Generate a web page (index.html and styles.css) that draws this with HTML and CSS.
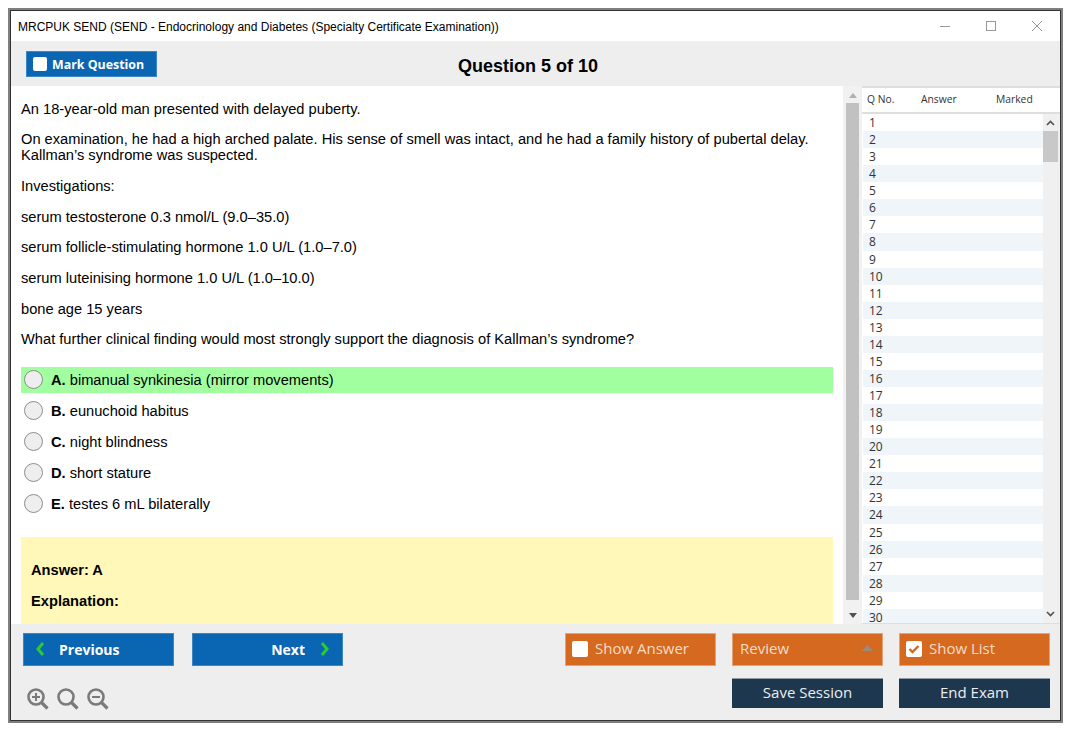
FILE: index.html
```html
<!DOCTYPE html>
<html lang="en">
<head>
<meta charset="utf-8">
<title>MRCPUK SEND</title>
<link rel="stylesheet" href="styles.css">
</head>
<body>
<div class="window">
  <header class="titlebar">
    <span class="title-text">MRCPUK SEND (SEND - Endocrinology and Diabetes (Specialty Certificate Examination))</span>
    <div class="win-controls">
      <svg class="win-icon" width="12" height="12" viewBox="0 0 12 12"><path d="M1 5.500h10" stroke="#999" fill="none"/></svg>
      <svg class="win-icon" width="12" height="12" viewBox="0 0 12 12"><rect x="1.500" y="0.500" width="9" height="9" stroke="#999" fill="none"/></svg>
      <svg class="win-icon" width="12" height="12" viewBox="0 0 12 12"><path d="M1 0l10 10M11 0L1 10" stroke="#999" fill="none"/></svg>
    </div>
  </header>
  <div class="toolbar">
    <button class="mark-btn"><span class="check"></span>Mark Question</button>
    <h1 class="q-heading">Question 5 of 10</h1>
    <span></span>
  </div>
  <main class="main">
    <section class="question">
      <p>An 18-year-old man presented with delayed puberty.</p>
      <p>On examination, he had a high arched palate. His sense of smell was intact, and he had a family history of pubertal delay. Kallman’s syndrome was suspected.</p>
      <p>Investigations:</p>
      <p>serum testosterone 0.3 nmol/L (9.0–35.0)</p>
      <p>serum follicle-stimulating hormone 1.0 U/L (1.0–7.0)</p>
      <p>serum luteinising hormone 1.0 U/L (1.0–10.0)</p>
      <p>bone age 15 years</p>
      <p>What further clinical finding would most strongly support the diagnosis of Kallman’s syndrome?</p>
      <div class="options">
        <div class="option correct"><span class="radio"></span><span><b>A.</b> bimanual synkinesia (mirror movements)</span></div>
        <div class="option"><span class="radio"></span><span><b>B.</b> eunuchoid habitus</span></div>
        <div class="option"><span class="radio"></span><span><b>C.</b> night blindness</span></div>
        <div class="option"><span class="radio"></span><span><b>D.</b> short stature</span></div>
        <div class="option"><span class="radio"></span><span><b>E.</b> testes 6 mL bilaterally</span></div>
      </div>
      <div class="answer">
        <p><b>Answer: A</b></p>
        <p><b>Explanation:</b></p>
      </div>
    </section>
    <div class="q-scroll">
      <svg width="8" height="5" viewBox="0 0 8 5"><path d="M4 0l4 5H0z" fill="#b0b0b0"/></svg>
      <div class="q-thumb"></div>
      <svg width="8" height="5" viewBox="0 0 8 5"><path d="M4 5l4-5H0z" fill="#505050"/></svg>
    </div>
    <aside class="list">
      <div class="list-head"><span class="c1">Q No.</span><span class="c2">Answer</span><span class="c3">Marked</span></div>
      <div class="list-body">
        <div class="rows">
          <div class="row">1</div><div class="row">2</div><div class="row">3</div><div class="row">4</div><div class="row">5</div>
          <div class="row">6</div><div class="row">7</div><div class="row">8</div><div class="row">9</div><div class="row">10</div>
          <div class="row">11</div><div class="row">12</div><div class="row">13</div><div class="row">14</div><div class="row">15</div>
          <div class="row">16</div><div class="row">17</div><div class="row">18</div><div class="row">19</div><div class="row">20</div>
          <div class="row">21</div><div class="row">22</div><div class="row">23</div><div class="row">24</div><div class="row">25</div>
          <div class="row">26</div><div class="row">27</div><div class="row">28</div><div class="row">29</div><div class="row">30</div>
        </div>
        <div class="l-scroll">
          <svg width="9" height="6" viewBox="0 0 9 6"><path d="M1 5l3.500-3.500L8 5" stroke="#505050" stroke-width="1.600" fill="none"/></svg>
          <div class="l-thumb"></div>
          <svg class="arrow-bottom" width="9" height="6" viewBox="0 0 9 6"><path d="M1 1l3.500 3.500L8 1" stroke="#505050" stroke-width="1.600" fill="none"/></svg>
        </div>
      </div>
    </aside>
  </main>
  <footer class="footer">
    <div class="foot-row">
      <div class="group nav">
        <button class="btn blue prev"><svg width="10" height="16" viewBox="0 0 10 16"><path d="M8 2L3 8l5 6" stroke="#2ecb2e" stroke-width="3" fill="none"/></svg>Previous</button>
        <button class="btn blue next">Next<svg width="10" height="16" viewBox="0 0 10 16"><path d="M2 2l5 6-5 6" stroke="#2ecb2e" stroke-width="3" fill="none"/></svg></button>
      </div>
      <div class="group actions">
        <button class="btn orange"><span class="check large"></span>Show Answer</button>
        <button class="btn orange review">Review<svg width="11" height="6" viewBox="0 0 11 6"><path d="M5.500 0L11 6H0z" fill="#9c8a7c"/></svg></button>
        <button class="btn orange"><span class="check large"><svg viewBox="0 0 16 16"><path d="M3.500 8l3 3 6-6" stroke="#d2691f" stroke-width="2.400" fill="none"/></svg></span>Show List</button>
      </div>
    </div>
    <div class="foot-row second">
      <div class="zooms">
        <svg width="22" height="22" viewBox="0 0 22 22"><circle cx="9" cy="9" r="7.500" stroke="#7a7a7a" stroke-width="2.600" fill="none"/><path d="M14.500 14.500L20.500 20.500" stroke="#7a7a7a" stroke-width="3.200" fill="none"/><path d="M5 9h8M9 5v8" stroke="#7a7a7a" stroke-width="2" fill="none"/></svg>
        <svg width="22" height="22" viewBox="0 0 22 22"><circle cx="9" cy="9" r="7.500" stroke="#7a7a7a" stroke-width="2.600" fill="none"/><path d="M14.500 14.500L20.500 20.500" stroke="#7a7a7a" stroke-width="3.200" fill="none"/></svg>
        <svg width="22" height="22" viewBox="0 0 22 22"><circle cx="9" cy="9" r="7.500" stroke="#7a7a7a" stroke-width="2.600" fill="none"/><path d="M14.500 14.500L20.500 20.500" stroke="#7a7a7a" stroke-width="3.200" fill="none"/><path d="M5 9h8" stroke="#7a7a7a" stroke-width="2" fill="none"/></svg>
      </div>
      <div class="group end">
        <button class="btn navy">Save Session</button>
        <button class="btn navy">End Exam</button>
      </div>
    </div>
  </footer>
</div>
</body>
</html>
```
FILE: styles.css
```css
* { box-sizing: border-box; }
html, body { margin: 0; padding: 0; background: #fff; }
body { font-family: "Liberation Sans", Arial, sans-serif; color: #000; }
button { font-family: inherit; border: 0; padding: 0; cursor: pointer; }

.window {
  margin: 10px;
  width: 1051px;
  height: 711px;
  border: 1px solid #333;
  box-shadow: 0 0 0 2px #7f7f7f;
  display: flex;
  flex-direction: column;
  background: #eee;
  overflow: hidden;
}

.titlebar {
  height: 30px;
  flex: none;
  background: #fff;
  display: flex;
  align-items: center;
  justify-content: space-between;
  padding: 1px 17px 0 7px;
}
.title-text { font-size: 12px; color: #000; }
.win-controls { display: flex; gap: 34px; }
.win-icon { display: block; }

.toolbar {
  height: 45px;
  flex: none;
  display: grid;
  grid-template-columns: 1fr auto 1fr;
  align-items: center;
  padding: 0 30px 0 15px;
}
.q-heading { margin: 0; padding-top: 6px; font-size: 18px; font-weight: bold; }
.mark-btn {
  justify-self: start;
  align-self: start;
  width: 131px;
  height: 26px;
  margin-top: 10px;
  background: #0a66b2;
  border: 1px solid #3c86c4;
  color: #fff;
  font-family: "Open Sans", sans-serif;
  font-weight: 700;
  font-size: 12.400px;
  display: flex;
  align-items: center;
  gap: 5px;
  padding-left: 6px;
}

.check {
  width: 14px;
  height: 14px;
  border-radius: 2px;
  background: #fff;
  display: block;
  flex: none;
}
.check.large { width: 16px; height: 16px; }
.check svg { display: block; width: 16px; height: 16px; }

.main { flex: 1; min-height: 0; display: flex; background: #fff; }

.question {
  width: 832px;
  flex: none;
  padding: 0 10px;
  font-size: 14.670px;
  line-height: 16px;
  overflow: hidden;
}
.question p { margin: 14.670px 0; }

.options { margin-top: 20px; display: flex; flex-direction: column; gap: 5px; }
.option {
  height: 26px;
  display: flex;
  align-items: center;
  gap: 8px;
  padding-left: 3px;
}
.option.correct { background: #a2ff9f; }
.radio {
  width: 19px;
  height: 19px;
  margin-top: -1px;
  border-radius: 50%;
  border: 1px solid #8d8d8d;
  background: #eee;
  flex: none;
}

.answer {
  margin-top: 20px;
  height: 200px;
  background: #fff8b8;
  padding: 25px 10px 0;
}
.answer p { margin: 0 0 15px; }

.q-scroll {
  width: 19px;
  flex: none;
  background: #f1f1f1;
  display: flex;
  flex-direction: column;
  align-items: center;
  padding: 7px 0 6px;
}
.q-thumb { width: 13px; flex: 1; background: #c1c1c1; margin: 5px 0 13px; }

.list { flex: 1; min-width: 0; display: flex; flex-direction: column; }
.list-head {
  height: 28px;
  flex: none;
  border-top: 2px solid #dedede;
  border-bottom: 2px solid #dedede;
  padding-bottom: 2px;
  background: #fff;
  display: flex;
  align-items: center;
  font-family: "Open Sans", sans-serif;
  font-size: 10.300px;
  color: #333;
}
.c1 { width: 59px; padding-left: 5px; }
.c2 { width: 75px; }
.list-body { flex: 1; min-height: 0; display: flex; overflow: hidden; border-bottom: 1px solid #dedede; }
.rows { flex: 1; padding: 0 0 0 1px; min-width: 0; }
.row {
  height: 17.070px;
  font-family: "Open Sans", sans-serif;
  font-size: 12px;
  line-height: 17px;
  color: #333;
  padding-left: 6px;
}
.row:nth-child(even) { background: #eff5f9; }
.l-scroll {
  width: 17px;
  flex: none;
  background: #f0f0f0;
  display: flex;
  flex-direction: column;
  align-items: flex-start;
  padding-top: 6px;
}
.l-scroll svg { margin-left: 3px; }
.l-thumb { width: 15px; height: 31px; background: #c8c8c8; margin-top: 5px; }
.l-scroll .arrow-bottom { margin-top: auto; margin-bottom: 6px; }

.footer {
  flex: none;
  height: 96px;
  background: #eee;
  padding: 9px 10px 0 12px;
  display: flex;
  flex-direction: column;
  gap: 12px;
}
.foot-row { display: flex; justify-content: space-between; }
.second { align-items: flex-start; }
.group { display: flex; }
.nav { gap: 18px; }
.actions, .end { gap: 16px; }

.btn {
  width: 151px;
  height: 33px;
  font-family: "Open Sans", sans-serif;
  font-size: 14px;
  display: flex;
  align-items: center;
  color: #fff;
  padding-bottom: 1px;
}
.blue { background: #0a66b2; border: 1px solid #3c86c4; font-weight: 700; }
.prev { padding-left: 11px; gap: 14px; }
.next { padding-right: 12px; gap: 15px; justify-content: flex-end; }
.orange { background: #d4691f; border: 1px solid #e8a172; color: #f7dcc6; font-size: 15px; padding-left: 6px; padding-bottom: 3px; gap: 7px; }
.orange .check { margin-top: 2px; }
.review { padding-left: 7px; padding-right: 9px; justify-content: space-between; }
.navy { background: #1d374e; border-top: 1px solid #8f9ca8; color: #eee; height: 30px; font-size: 15px; padding-bottom: 3px; justify-content: center; }
.zooms { display: flex; gap: 8px; padding-left: 4px; padding-top: 10px; }
.zooms svg { display: block; }
```
